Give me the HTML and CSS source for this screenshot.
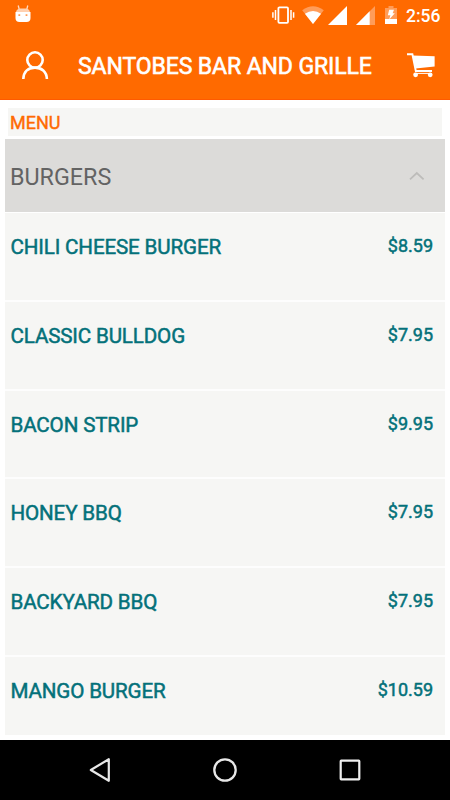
FILE: index.html
```html
<!DOCTYPE html>
<html lang="en">
<head>
    <meta charset="UTF-8">
    <title>Santobes Bar and Grille - Menu</title>
    <link rel="stylesheet" href="styles.css">
</head>
<body>

<header class="app-header">
    <div class="status-bar">
        <svg class="debug-icon" width="16" height="18" viewBox="0 0 16 18">
            <path d="M3.2 0.5L4.4 5M12.8 0.5L11.6 5" stroke="#ffd9bf" stroke-width="1.3"/>
            <path d="M1 7.5Q1.4 4 5 3.6H11Q14.6 4 15 7.5Z" fill="#ffd0b0"/>
            <path d="M0.5 7H15.5V13Q15.5 17 11.5 17H4.5Q0.5 17 0.5 13Z" fill="#fff"/>
            <path d="M3.4 9.2H5.2V11H3.4ZM10.6 9.2H12.4V11H10.6Z" fill="#ff9a55"/>
        </svg>
        <div class="status-icons">
            <svg class="vibrate-icon" width="24" height="18" viewBox="0 0 24 18">
                <rect x="6.4" y="1.4" width="9.6" height="15.4" rx="1" fill="none" stroke="#fff" stroke-width="1.8"/>
                <path d="M3.5 4V14M19 4V14M0.9 6.3V11.7M21.6 6.3V11.7" stroke="#fff" stroke-width="1.5"/>
            </svg>
            <svg class="wifi-icon" width="22" height="18" viewBox="0 0 22 18">
                <path d="M11 18L0.2 4.2Q11 -3.8 21.8 4.2Z" fill="#ff9c59"/>
                <path d="M11 18L2.9 7.7Q11 2.4 19.1 7.7Z" fill="#fff"/>
            </svg>
            <svg class="signal-icon" width="19" height="19" viewBox="0 0 19 19">
                <path d="M19 0V19H0Z" fill="#fff"/>
            </svg>
            <svg class="signal-icon-low" width="19" height="19" viewBox="0 0 19 19">
                <path d="M19 0V19H0Z" fill="#ff9c59"/>
                <path d="M13.7 5.3V19H0Z" fill="#fff"/>
            </svg>
            <svg class="battery-icon" width="12" height="18" viewBox="0 0 12 18">
                <path d="M0 2H3.5V0H8.5V2H12V13H0Z" fill="#ff9c59"/>
                <path d="M0 13H12V18H0Z" fill="#fff"/>
                <path d="M4.2 3.8H9L7.6 7.2H9.8L4.2 13.4L5.4 9.2H2.8Z" fill="#fff"/>
            </svg>
        </div>
        <span class="clock">2:56</span>
    </div>
    <div class="title-bar">
        <svg class="user-icon" width="28" height="30" viewBox="0 0 28 30">
            <g fill="none" stroke="#fff" stroke-width="2.6">
                <circle cx="14" cy="10" r="7.7"/>
                <path d="M2.3 29C2.6 21.5 7.5 17.6 14 17.6S25.6 21.5 25.9 29"/>
            </g>
        </svg>
        <h1>SANTOBES BAR AND GRILLE</h1>
        <svg class="cart-icon" width="28" height="25" viewBox="0 0 28 25">
            <path d="M0 1.3H5.4L8.8 18H25" fill="none" stroke="#fff" stroke-width="1.9"/>
            <path d="M5.6 2.6L27.6 3.2V13.4L8.5 15.6Z" fill="#fff"/>
            <path d="M7.4 20.4H24" fill="none" stroke="#fff" stroke-width="1"/>
            <circle cx="8.6" cy="21.8" r="2.4" fill="#fff"/>
            <circle cx="23.2" cy="21.8" r="2.4" fill="#fff"/>
        </svg>
    </div>
</header>

<main class="menu">
    <h2 class="menu-label">MENU</h2>
    <div class="category">
        <span>BURGERS</span>
        <svg width="16" height="10" viewBox="0 0 16 10">
            <path d="M1 8.3L7.8 2L14.6 8.3" fill="none" stroke="#bdbcba" stroke-width="1.8"/>
        </svg>
    </div>
    <ul class="items">
        <li><span class="name">CHILI CHEESE BURGER</span><span class="price">$8.59</span></li>
        <li><span class="name">CLASSIC BULLDOG</span><span class="price">$7.95</span></li>
        <li><span class="name">BACON STRIP</span><span class="price">$9.95</span></li>
        <li><span class="name">HONEY BBQ</span><span class="price">$7.95</span></li>
        <li><span class="name">BACKYARD BBQ</span><span class="price">$7.95</span></li>
        <li><span class="name">MANGO BURGER</span><span class="price">$10.59</span></li>
    </ul>
</main>

<nav class="nav-bar">
    <svg width="24" height="26" viewBox="0 0 24 26">
        <path d="M20.8 2.2V23.8L2.8 13Z" fill="none" stroke="#e8e8e8" stroke-width="2.2" stroke-linejoin="round"/>
    </svg>
    <svg width="26" height="26" viewBox="0 0 26 26">
        <circle cx="13" cy="13" r="10.7" fill="none" stroke="#e8e8e8" stroke-width="2.3"/>
    </svg>
    <svg width="24" height="24" viewBox="0 0 24 24">
        <rect x="2.7" y="2.7" width="18.6" height="18.6" rx="0.5" fill="none" stroke="#f0f0f0" stroke-width="2.2"/>
    </svg>
</nav>

</body>
</html>
```
FILE: styles.css
```css
* { box-sizing: border-box; }
body {
    margin: 0;
    width: 450px;
    height: 800px;
    overflow: hidden;
    display: flex;
    flex-direction: column;
    font-family: Roboto, sans-serif;
    background-color: #fff;
}
svg { display: block; flex: none; }

/* Header */
.app-header {
    height: 100px;
    flex: none;
    background-color: #ff6a00;
    border-bottom: 1px solid #ff5a00;
    color: #fff;
}
.status-bar {
    display: flex;
    height: 31px;
    padding: 5px 10px 0 15px;
}
.status-icons { display: flex; margin-left: auto; padding-top: 1px; }
.wifi-icon { margin-left: 6px; }
.signal-icon { margin-left: 4px; }
.signal-icon-low { margin-left: 9px; }
.battery-icon { margin-left: 10px; }
.clock {
    width: 34px;
    margin-left: 9px;
    font-size: 17.5px;
    font-weight: 500;
    line-height: 22px;
    white-space: nowrap;
}
.title-bar {
    display: flex;
    align-items: center;
    height: 68px;
    padding: 0 15px 0 21px;
}
.title-bar h1 {
    flex: 1;
    margin: 0 0 0 29px;
    padding-top: 3px;
    font-size: 23px;
    font-weight: 400;
    letter-spacing: -0.1px;
    line-height: 30px;
    white-space: nowrap;
    -webkit-text-stroke: 0.6px;
}

/* Menu list */
.menu {
    flex: 1;
    min-height: 0;
    padding: 8px 5px 5px;
    display: flex;
    flex-direction: column;
}
.menu-label {
    flex: none;
    height: 28px;
    margin: 0 3px 3px;
    padding-left: 2px;
    background-color: #f6f6f4;
    color: #ff6a00;
    font-size: 18px;
    font-weight: 400;
    line-height: 29px;
    -webkit-text-stroke: 0.4px;
}
.category {
    flex: none;
    height: 73px;
    margin-bottom: 1px;
    padding: 2px 20px 0 5px;
    display: flex;
    align-items: center;
    justify-content: space-between;
    background-color: #dcdbd9;
    color: #636363;
    font-size: 23.3px;
}
.category svg { margin-bottom: 2px; }
.items {
    flex: 1;
    min-height: 0;
    margin: 0;
    padding: 0;
    overflow: hidden;
    list-style: none;
    background-color: #f6f6f4;
}
.items li {
    height: 88.8px;
    padding: 19px 12px 0 5.5px;
    display: flex;
    justify-content: space-between;
    border-bottom: 2px solid #fdfdfd;
    color: #04717a;
    line-height: 30px;
    -webkit-text-stroke: 0.5px;
}
.name { font-size: 20.6px; letter-spacing: -0.15px; }
.price { font-size: 18px; line-height: 28px; }

/* Android navigation */
.nav-bar {
    flex: none;
    height: 60px;
    padding: 0 88px;
    display: flex;
    align-items: center;
    justify-content: space-between;
    background-color: #000;
}
```
